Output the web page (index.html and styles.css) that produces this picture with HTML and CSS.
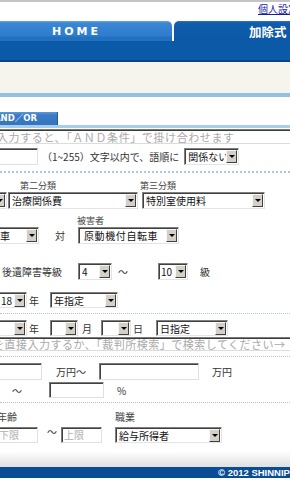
FILE: index.html
```html
<!DOCTYPE html>
<html lang="ja">
<head>
<meta charset="utf-8">
<title>検索</title>
<link rel="stylesheet" href="styles.css">
</head>
<body>
<div class="page">
  <div class="topbar"><a class="userlink" href="#">個人設定</a></div>
  <nav class="tabs">
    <div class="tab tab-home">HOME</div>
    <div class="tab tab-kajo">加除式</div>
  </nav>
  <div class="band"></div>
  <div class="notice"></div>

  <div class="search">
    <div class="modetabs"><span class="modetab">AND／OR</span></div>
    <div class="field kwfield">入力すると、「ＡＮＤ条件」で掛け合わせます</div>

    <div class="row row-len">
      <span class="inp inp-len"></span>
      <span class="txt len-txt">（1~255）文字以内で、語順に</span>
      <span class="sel sel-order"><span class="val">関係ない</span><span class="arr"></span></span>
    </div>

    <div class="dots dots-blue"></div>

    <div class="row row-lab">
      <span class="lab lab-cat2">第二分類</span>
      <span class="lab">第三分類</span>
    </div>
    <div class="row row-cat">
      <span class="sel sel-cat1"><span class="val">積極損害</span><span class="arr"></span></span>
      <span class="sel sel-cat2"><span class="val">治療関係費</span><span class="arr"></span></span>
      <span class="sel sel-cat3"><span class="val">特別室使用料</span><span class="arr"></span></span>
    </div>

    <div class="row row-lab2">
      <span class="lab lab-victim">被害者</span>
    </div>
    <div class="row row-vs">
      <span class="sel sel-car"><span class="val">自動車</span><span class="arr"></span></span>
      <span class="txt vs">対</span>
      <span class="sel sel-moped"><span class="val">原動機付自転車</span><span class="arr"></span></span>
    </div>

    <div class="row row-grade">
      <span class="txt grade-lab">後遺障害等級</span>
      <span class="sel sel-g1"><span class="val">4</span><span class="arr"></span></span>
      <span class="txt tilde-g">～</span>
      <span class="sel sel-g2"><span class="val">10</span><span class="arr"></span></span>
      <span class="txt kyu">級</span>
    </div>

    <div class="row row-year">
      <span class="sel sel-yr"><span class="val">18</span><span class="arr"></span></span>
      <span class="txt unit">年</span>
      <span class="sel sel-ymode"><span class="val">年指定</span><span class="arr"></span></span>
    </div>

    <div class="dots"></div>

    <div class="row row-date">
      <span class="sel sel-yr"><span class="val"></span><span class="arr"></span></span>
      <span class="txt unit">年</span>
      <span class="sel sel-mo"><span class="val"></span><span class="arr"></span></span>
      <span class="txt unit">月</span>
      <span class="sel sel-day"><span class="val"></span><span class="arr"></span></span>
      <span class="txt unit">日</span>
      <span class="sel sel-dmode"><span class="val">日指定</span><span class="arr"></span></span>
    </div>
    <div class="field courtfield">を直接入力するか、「裁判所検索」で検索してください→</div>

    <div class="dots"></div>

    <div class="row row-amt">
      <span class="inp inp-amt1"></span>
      <span class="txt man1">万円～</span>
      <span class="inp inp-amt2"></span>
      <span class="txt man2">万円</span>
    </div>
    <div class="row row-pct">
      <span class="txt tilde-p">～</span>
      <span class="inp inp-pct"></span>
      <span class="txt pct">%</span>
    </div>

    <div class="dots"></div>

    <div class="row row-lab3">
      <span class="lab lab-age">年齢</span>
      <span class="lab">職業</span>
    </div>
    <div class="row row-age">
      <span class="inp inp-low">下限</span>
      <span class="txt tilde-a">～</span>
      <span class="inp inp-high">上限</span>
      <span class="sel sel-job"><span class="val">給与所得者</span><span class="arr"></span></span>
    </div>
  </div>

  <div class="foot-shade"></div>
  <footer class="footer">© 2012 SHINNIPPON-HOKI Publishing Co.,Ltd. All Rights Reserved.</footer>
</div>
</body>
</html>
```
FILE: styles.css
```css
* { box-sizing: border-box; }
html, body { margin: 0; padding: 0; }
body {
  width: 290px;
  height: 480px;
  overflow: hidden;
  background: #fff;
  font-family: "Noto Sans CJK JP", sans-serif;
  font-size: 10px;
  color: #333;
}
.page { width: 290px; }

/* header */
.topbar {
  height: 21px;
  border-top: 2px solid #c4c4c4;
  display: flex;
  padding-left: 258px;
  white-space: nowrap;
}
.userlink {
  font-size: 10px;
  line-height: 11px;
  margin-top: 1px;
  color: #1a1aa8;
  text-decoration: underline;
}
.tabs { display: flex; height: 20px; gap: 2px; background: #fff; }
.tab {
  height: 20px;
  color: #fff;
  font-weight: bold;
  display: flex;
  align-items: center;
  white-space: nowrap;
  flex: none;
}
.tab-home {
  width: 172px;
  background: linear-gradient(#68a8e4 0, #3b87d4 2px, #2e7ccc 15px, #2270c0 16px, #2270c0 100%);
  border-top-right-radius: 5px;
  padding-left: 52px;
  font-family: "DejaVu Sans", sans-serif;
  font-size: 11px;
  letter-spacing: 3px;
}
.tab-kajo {
  flex: 1;
  background: linear-gradient(#2c72bb 0, #0f5dac 2px, #0b58a6 100%);
  border-top-left-radius: 5px;
  padding-left: 75px;
  font-size: 12.5px;
}
.band {
  height: 21px;
  background: #0b5aa8;
  border-bottom: 2px solid #084585;
}
.notice {
  height: 35px;
  background: #f5f4ed;
  border-bottom: 4px solid #93c1e2;
}

/* search form */
.search { padding-top: 15px; }
.modetabs {
  height: 16px;
  border-bottom: 3px solid #a6cdea;
}
.modetab {
  display: block;
  width: 58px;
  height: 13px;
  background: linear-gradient(#6199d8, #3b7bc5 3px, #3574bf);
  border-right: 1px solid #25589a;
  color: #fff;
  font-family: "DejaVu Sans", "Noto Sans CJK JP", sans-serif;
  font-weight: bold;
  font-size: 8.5px;
  line-height: 13px;
  text-indent: -6px;
  overflow: hidden;
  white-space: nowrap;
}
.field {
  height: 15px;
  border-top: 1px solid #7a7a7a;
  box-shadow: inset 0 1px 0 #3c3c3c;
  border-bottom: 1px solid #dcdcdc;
  color: #a9a9a9;
  font-size: 11px;
  line-height: 14px;
  white-space: nowrap;
  overflow: hidden;
}
.kwfield { margin-top: 1px; text-indent: -3px; letter-spacing: 0.6px; }
.courtfield { margin-top: 1px; height: 14px; line-height: 13px; text-indent: -7px; letter-spacing: 0.5px; }

.row { display: flex; align-items: center; white-space: nowrap; }
.txt { flex: none; color: #333; }
.lab { flex: none; color: #444; font-size: 9px; }

.inp {
  display: block;
  flex: none;
  height: 17px;
  border: 1px solid;
  border-color: #7b7b7b #e0e0e0 #e0e0e0 #7b7b7b;
  box-shadow: inset 1px 1px 0 #404040;
  background: #fff;
  color: #b0b0b0;
  font-size: 10px;
  line-height: 14px;
  padding-left: 2px;
  overflow: hidden;
}
.sel {
  display: flex;
  flex: none;
  align-items: center;
  height: 17px;
  border: 1px solid;
  border-color: #808080 #e4e4e4 #e4e4e4 #808080;
  box-shadow: inset 1px 1px 0 #404040;
  background: #fff;
  padding: 1px 1px 1px 3px;
  color: #111;
  font-size: 10px;
}
.sel .val { flex: 1; overflow: hidden; line-height: 13px; }
.arr {
  flex: none;
  width: 11px;
  height: 13px;
  background: #d4d0c8;
  border: 1px solid;
  border-color: #f6f6f6 #404040 #404040 #f6f6f6;
  display: flex;
  align-items: center;
  justify-content: center;
}
.arr::after {
  content: "";
  display: block;
  border-left: 3px solid transparent;
  border-right: 3px solid transparent;
  border-top: 3px solid #000;
}

.dots { border-top: 1px dotted #b8c3cc; }
.dots-blue { margin-top: 6px; border-top: 2px dotted #a9c9e2; }

/* row: length */
.row-len { margin-top: 4px; height: 17px; }
.inp-len { margin-left: -2px; width: 40px; }
.len-txt { margin-left: 4px; }
.sel-order { margin-left: 5px; width: 55px; }

/* categories */
.row-lab { margin-top: 6px; height: 12px; }
.lab-cat2 { margin-left: 20px; width: 120px; }
.row-cat { margin-top: 1px; height: 17px; }
.sel-cat1 { margin-left: -119px; width: 126px; }
.sel-cat2 { margin-left: 1px; width: 130px; }
.sel-cat3 { margin-left: 4px; width: 123px; }

/* victim */
.row-lab2 { margin-top: 5px; height: 12px; }
.lab-victim { margin-left: 77px; }
.row-vs { margin-top: 1px; height: 17px; }
.sel-car { margin-left: -24px; width: 63px; }
.vs { margin-left: 16px; }
.sel-moped { margin-left: 13px; width: 101px; padding-left: 5px; letter-spacing: 0.6px; }

/* grade */
.row-grade { margin-top: 19px; height: 17px; }
.grade-lab { margin-left: 2px; width: 60px; }
.sel-g1 { margin-left: 16px; width: 34px; }
.tilde-g { margin-left: 6px; }
.sel-g2 { margin-left: 30px; width: 30px; padding-left: 2px; }
.kyu { margin-left: 12px; }

/* years */
.row-year { margin-top: 12px; height: 16px; }
.row-year + .dots { margin-top: 5px; }
.sel-yr { margin-left: -2px; width: 29px; height: 16px; padding-left: 2px; }
.unit { margin-left: 2px; width: 10px; }
.sel-ymode { margin-left: 11px; width: 68px; height: 16px; }
.row-date { margin-top: 6px; height: 16px; }
.sel-mo { margin-left: 11px; width: 28px; height: 16px; }
.row-date .unit { margin-left: 4px; }
.sel-day { margin-left: 9px; width: 30px; height: 16px; }
.row-date .sel-day + .unit { margin-left: 2px; }
.sel-dmode { margin-left: 13px; width: 72px; height: 16px; }
.row-date .sel-yr + .unit { margin-left: 2px; }
.courtfield + .dots { margin-top: 5px; }

/* amounts */
.row-amt { margin-top: 6px; height: 17px; }
.inp-amt1 { margin-left: -2px; width: 44px; }
.man1 { margin-left: 14px; }
.inp-amt2 { margin-left: 13px; width: 100px; }
.man2 { margin-left: 13px; }
.row-pct { margin-top: 2px; height: 16px; }
.row-pct + .dots { margin-top: 4px; }
.tilde-p { margin-left: 12px; }
.inp-pct { margin-left: 27px; width: 55px; height: 16px; }
.pct { margin-left: 13px; }

/* age / job */
.row-lab3 { margin-top: 7px; height: 12px; }
.lab-age { margin-left: -3px; width: 118px; font-size: 10px; }
.row-lab3 .lab { font-size: 10px; }
.row-age { margin-top: 5px; height: 16px; }
.inp-low { margin-left: -4px; width: 42px; height: 16px; }
.tilde-a { margin-left: 9px; align-self: flex-start; line-height: 9px; }
.inp-high { margin-left: 4px; width: 41px; height: 16px; }
.sel-job { margin-left: 13px; width: 107px; height: 16px; }

/* footer */
.foot-shade {
  margin-top: 9px;
  height: 15px;
  background: linear-gradient(#fdfdfd, #e0e0e0);
}
.footer {
  height: 11px;
  background: #0a4d95;
  color: #fff;
  font-family: "Liberation Sans", sans-serif;
  font-weight: bold;
  font-size: 9.5px;
  line-height: 11px;
  padding-left: 218px;
  white-space: nowrap;
  overflow: hidden;
}
```
